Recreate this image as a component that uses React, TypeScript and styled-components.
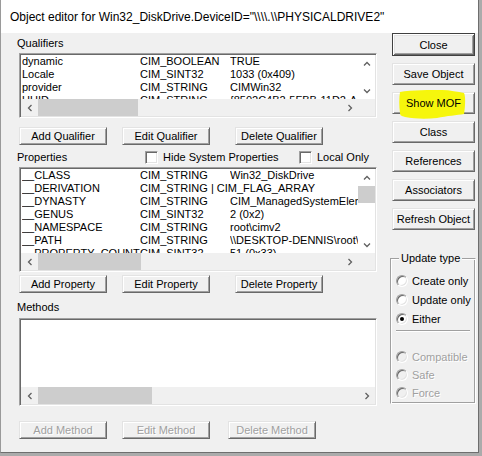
import React from 'react';
import styled, { createGlobalStyle, css } from 'styled-components';

const GlobalStyle = createGlobalStyle`
  html, body {
    margin: 0;
    padding: 0;
  }
  body {
    background: #ababab;
    font-family: "Liberation Sans", Arial, sans-serif;
    font-size: 11px;
    color: #000;
  }
`;

const Window = styled.div`
  box-sizing: border-box;
  width: 479px;
  height: 453px;
  display: flex;
  flex-direction: column;
  background: #f0f0f0;
  border-left: 1px solid #9a9a9a;
  border-right: 1px solid #6e6e6e;
  border-bottom: 1px solid #6e6e6e;
`;

const TitleBar = styled.div`
  flex: none;
  height: 33px;
  display: flex;
  align-items: center;
  padding-left: 9px;
  background: #fff;
  font-family: "Liberation Sans", Arial, sans-serif;
  font-size: 12px;
  white-space: nowrap;
`;

const Body = styled.div`
  flex: 1;
  display: flex;
  gap: 13px;
  padding-left: 16px;
`;

const LeftColumn = styled.div`
  width: 360px;
  display: flex;
  flex-direction: column;
`;

const SectionLabel = styled.div<{ $top: number }>`
  margin-top: ${p => p.$top}px;
  height: 13px;
  line-height: 13px;
`;

const HeaderRow = styled.div`
  margin-top: 6px;
  height: 13px;
  line-height: 13px;
  display: grid;
  grid-template-columns: 128px 154px auto;
  align-items: center;
`;

const CheckItem = styled.label`
  display: flex;
  align-items: center;
  gap: 5px;
  white-space: nowrap;
`;

const sunken = css`
  border: 1px solid;
  border-color: #a0a0a0 #fff #fff #a0a0a0;
  box-shadow: inset 1px 1px #696969, inset -1px -1px #e3e3e3;
`;

const CheckBox = styled.span`
  box-sizing: border-box;
  width: 13px;
  height: 13px;
  background: #fff;
  ${sunken};
`;

const ListBox = styled.div<{ $top: number; $height: number; $vscroll?: boolean }>`
  box-sizing: border-box;
  width: 358px;
  height: ${p => p.$height}px;
  margin: ${p => p.$top}px 0 0 2px;
  padding: 1px;
  background: #fff;
  ${sunken};
  display: grid;
  grid-template-columns: ${p => (p.$vscroll ? '1fr 17px' : '1fr')};
  grid-template-rows: 1fr 17px;
`;

const Rows = styled.div`
  overflow: hidden;
  padding-left: 1px;
`;

const Row = styled.div`
  display: grid;
  grid-template-columns: 118px 90px 1fr;
  height: 13px;
  line-height: 13px;
  white-space: nowrap;
`;

const Cell = styled.div<{ $span?: number }>`
  overflow: hidden;
  ${p => p.$span && css`grid-column: span ${p.$span};`}
`;

const VScroll = styled.div`
  display: flex;
  flex-direction: column;
  background: #fff;
`;

const HScroll = styled.div`
  display: flex;
  background: #f0f0f0;
`;

const Corner = styled.div`
  background: #f0f0f0;
`;

const ArrowBox = styled.div`
  flex: none;
  width: 17px;
  height: 17px;
  display: flex;
  align-items: center;
  justify-content: center;
`;

const Track = styled.div<{ $vertical?: boolean }>`
  flex: 1;
  display: flex;
  flex-direction: ${p => (p.$vertical ? 'column' : 'row')};
`;

const Thumb = styled.div<{ $size: number; $vertical?: boolean }>`
  flex: none;
  background: #cdcdcd;
  ${p => (p.$vertical ? css`height: ${p.$size}px;` : css`width: ${p.$size}px;`)}
`;

const ButtonRow = styled.div<{ $top: number }>`
  display: flex;
  margin: ${p => p.$top}px 0 0 2px;
`;

const raised = css`
  border: 1px solid;
  border-color: #e3e3e3 #696969 #696969 #e3e3e3;
  box-shadow: inset 1px 1px #fff, inset -1px -1px #a0a0a0;
`;

const PushButton = styled.button<{ $gap?: number; $default?: boolean }>`
  box-sizing: border-box;
  position: relative;
  overflow: visible;
  width: 88px;
  height: 18px;
  margin: 0 0 0 ${p => p.$gap ?? 0}px;
  padding: 0;
  background: #f0f0f0;
  font-family: "Liberation Sans", Arial, sans-serif;
  font-size: 11px;
  color: #000;
  white-space: nowrap;
  ${raised};
  ${p =>
    p.$default &&
    css`
      border: 1px solid #404040;
      box-shadow: inset 1px 1px #fff, inset -1px -1px #696969, inset 2px 2px #e3e3e3,
        inset -2px -2px #a0a0a0;
    `}
  &:disabled {
    color: #a0a0a0;
    text-shadow: 1px 1px 0 #fff;
  }
`;

const RightColumn = styled.div`
  width: 86px;
  display: flex;
  flex-direction: column;
  gap: 7px;
`;

const SideButton = styled(PushButton)<{ $h?: number }>`
  width: 83px;
  height: ${p => p.$h ?? 22}px;
  margin-left: 2px;
`;

const ButtonText = styled.span`
  position: relative;
  z-index: 1;
`;

const Highlight = styled.svg`
  position: absolute;
  left: 4px;
  top: -4px;
  z-index: 0;
`;

const GroupBox = styled.div`
  position: relative;
  margin-top: 21px;
  padding: 12px 5px 1px 5px;
  border: 1px solid;
  border-color: #a0a0a0 #fff #fff #a0a0a0;
  box-shadow: inset 1px 1px #fff, inset -1px -1px #a0a0a0;
`;

const GroupTitle = styled.span`
  position: absolute;
  top: -7px;
  left: 8px;
  padding: 0 2px;
  line-height: 13px;
  background: #f0f0f0;
`;

const RadioRow = styled.label<{ $h: number; $disabled?: boolean }>`
  display: flex;
  align-items: center;
  gap: 4px;
  height: ${p => p.$h}px;
  white-space: nowrap;
  ${p =>
    p.$disabled &&
    css`
      color: #a0a0a0;
      text-shadow: 1px 1px 0 #fff;
    `}
`;

const Radio = styled.span<{ $checked?: boolean; $disabled?: boolean }>`
  box-sizing: border-box;
  flex: none;
  width: 12px;
  height: 12px;
  border-radius: 50%;
  background: ${p => (p.$disabled ? '#f0f0f0' : '#fff')};
  ${sunken};
  display: flex;
  align-items: center;
  justify-content: center;
  &::after {
    content: '';
    width: 4px;
    height: 4px;
    border-radius: 50%;
    background: #000;
    display: ${p => (p.$checked ? 'block' : 'none')};
  }
`;

const Separator = styled.div`
  margin: 2px 0 16px;
  border-top: 1px solid #a0a0a0;
  border-bottom: 1px solid #fff;
`;

type Dir = 'up' | 'down' | 'left' | 'right';

const Chevron = ({ dir }: { dir: Dir }) => {
  const pts = {
    up: '1,5.5 4,2.5 7,5.5',
    down: '1,2.5 4,5.5 7,2.5',
    left: '5.5,1 2.5,4 5.5,7',
    right: '2.5,1 5.5,4 2.5,7',
  }[dir];
  return (
    <svg width="8" height="8" viewBox="0 0 8 8">
      <polyline points={pts} fill="none" stroke="#606060" strokeWidth="1.3" />
    </svg>
  );
};

const HBar = ({ thumb }: { thumb: number }) => (
  <HScroll>
    <ArrowBox><Chevron dir="left" /></ArrowBox>
    <Track><Thumb $size={thumb} /></Track>
    <ArrowBox><Chevron dir="right" /></ArrowBox>
  </HScroll>
);

const VBar = ({ thumb }: { thumb: number }) => (
  <VScroll>
    <ArrowBox><Chevron dir="up" /></ArrowBox>
    <Track $vertical>{thumb > 0 && <Thumb $vertical $size={thumb} />}</Track>
    <ArrowBox><Chevron dir="down" /></ArrowBox>
  </VScroll>
);

type Item = { name: string; type: string; value: string; span?: boolean };

const qualifiers: Item[] = [
  { name: 'dynamic', type: 'CIM_BOOLEAN', value: 'TRUE' },
  { name: 'Locale', type: 'CIM_SINT32', value: '1033 (0x409)' },
  { name: 'provider', type: 'CIM_STRING', value: 'CIMWin32' },
  { name: 'UUID', type: 'CIM_STRING', value: '{8502C4B2-5FBB-11D2-AAC1-006008C78BC7}' },
];

const properties: Item[] = [
  { name: '__CLASS', type: 'CIM_STRING', value: 'Win32_DiskDrive' },
  { name: '__DERIVATION', type: 'CIM_STRING | CIM_FLAG_ARRAY', value: '', span: true },
  { name: '__DYNASTY', type: 'CIM_STRING', value: 'CIM_ManagedSystemElement' },
  { name: '__GENUS', type: 'CIM_SINT32', value: '2 (0x2)' },
  { name: '__NAMESPACE', type: 'CIM_STRING', value: 'root\\cimv2' },
  { name: '__PATH', type: 'CIM_STRING', value: '\\\\DESKTOP-DENNIS\\root\\cimv2:Win32_DiskDrive.DeviceID' },
  { name: '__PROPERTY_COUNT', type: 'CIM_SINT32', value: '51 (0x33)' },
];

const ItemRows = ({ items }: { items: Item[] }) => (
  <Rows>
    {items.map(it => (
      <Row key={it.name}>
        <Cell>{it.name}</Cell>
        {it.span ? <Cell $span={2}>{it.type}</Cell> : <Cell>{it.type}</Cell>}
        {!it.span && <Cell>{it.value}</Cell>}
      </Row>
    ))}
  </Rows>
);

const title =
  'Object editor for Win32_DiskDrive.DeviceID="' + '\\\\\\\\.\\\\PHYSICALDRIVE2' + '"';

export default function App() {
  return (
    <>
      <GlobalStyle />
      <Window>
        <TitleBar>{title}</TitleBar>
        <Body>
          <LeftColumn>
            <SectionLabel $top={4}>Qualifiers</SectionLabel>
            <ListBox $top={3} $height={65} $vscroll>
              <ItemRows items={qualifiers} />
              <VBar thumb={0} />
              <HBar thumb={100} />
              <Corner />
            </ListBox>
            <ButtonRow $top={9}>
              <PushButton>Add Qualifier</PushButton>
              <PushButton $gap={15}>Edit Qualifier</PushButton>
              <PushButton $gap={25}>Delete Qualifier</PushButton>
            </ButtonRow>

            <HeaderRow>
              <span>Properties</span>
              <CheckItem><CheckBox />Hide System Properties</CheckItem>
              <CheckItem><CheckBox />Local Only</CheckItem>
            </HeaderRow>
            <ListBox $top={3} $height={105} $vscroll>
              <ItemRows items={properties} />
              <VBar thumb={17} />
              <HBar thumb={103} />
              <Corner />
            </ListBox>
            <ButtonRow $top={3}>
              <PushButton>Add Property</PushButton>
              <PushButton $gap={15}>Edit Property</PushButton>
              <PushButton $gap={25}>Delete Property</PushButton>
            </ButtonRow>

            <SectionLabel $top={8}>Methods</SectionLabel>
            <ListBox $top={4} $height={88}>
              <Rows />
              <HBar thumb={114} />
            </ListBox>
            <ButtonRow $top={15}>
              <PushButton disabled>Add Method</PushButton>
              <PushButton disabled $gap={15}>Edit Method</PushButton>
              <PushButton disabled $gap={18}>Delete Method</PushButton>
            </ButtonRow>
          </LeftColumn>

          <RightColumn>
            <SideButton $default $h={23}>Close</SideButton>
            <SideButton>Save Object</SideButton>
            <SideButton>
              <Highlight width="70" height="31" viewBox="0 0 70 31">
                <path
                  d="M3 3 C14 1 34 1 45 1 C53 1 61 3 67 4 C69 8 68 20 67 25 C60 26 50 27 40 29 C30 30 18 30 8 28 C4 27 3 26 3 24 C2 17 2 9 3 3 Z"
                  fill="#f6f60c"
                />
              </Highlight>
              <ButtonText>Show MOF</ButtonText>
            </SideButton>
            <SideButton>Class</SideButton>
            <SideButton>References</SideButton>
            <SideButton>Associators</SideButton>
            <SideButton>Refresh Object</SideButton>

            <GroupBox>
              <GroupTitle>Update type</GroupTitle>
              <RadioRow $h={19}><Radio />Create only</RadioRow>
              <RadioRow $h={19}><Radio />Update only</RadioRow>
              <RadioRow $h={19}><Radio $checked />Either</RadioRow>
              <Separator />
              <RadioRow $h={18} $disabled><Radio $disabled />Compatible</RadioRow>
              <RadioRow $h={18} $disabled><Radio $disabled />Safe</RadioRow>
              <RadioRow $h={18} $disabled><Radio $disabled />Force</RadioRow>
            </GroupBox>
          </RightColumn>
        </Body>
      </Window>
    </>
  );
}
